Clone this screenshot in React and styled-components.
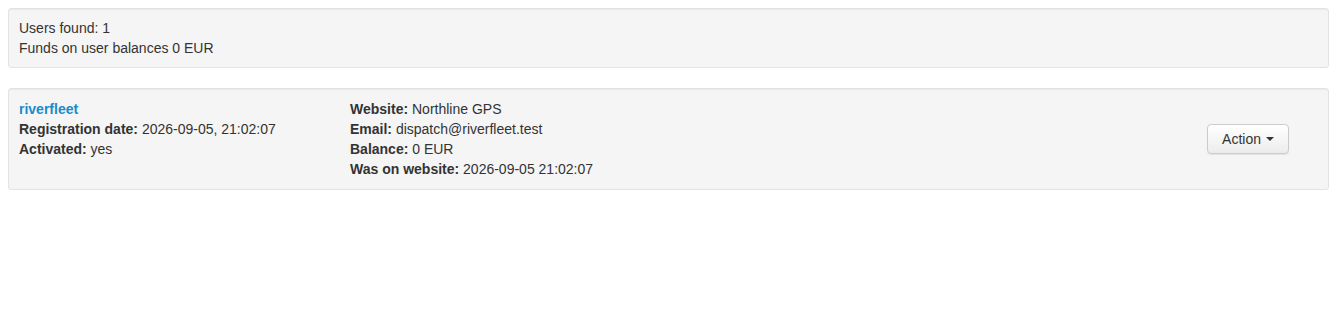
import styled, { createGlobalStyle } from "styled-components";

const GlobalStyle = createGlobalStyle`
  body {
    margin: 8px;
    font-family: "Liberation Sans", Arial, sans-serif;
    font-size: 14px;
    line-height: 20px;
    color: #333;
    background: #fff;
  }
`;

const Well = styled.div`
  background-color: #f5f5f5;
  border: 1px solid #e3e3e3;
  border-radius: 3px;
  box-shadow: inset 0 1px 1px rgba(0, 0, 0, 0.05);
  padding: ${(p) => (p.roomy ? "10px" : "9px 10px")};
  margin-bottom: 20px;
`;

const UserRow = styled.div`
  display: flex;
  align-items: center;
`;

const Column = styled.div`
  width: ${(p) => p.width || "auto"};
  flex: ${(p) => (p.grow ? 1 : "none")};
`;

const Line = styled.div``;

const Label = styled.b`
  font-weight: bold;
`;

const UserLink = styled.a`
  color: #1a8bcc;
  font-weight: bold;
  text-decoration: none;
`;

const ActionButton = styled.button`
  display: inline-flex;
  align-items: center;
  gap: 5px;
  margin-right: 29px;
  height: 30px;
  padding: 0 14px;
  font-family: inherit;
  font-size: 14px;
  color: #333;
  background: linear-gradient(to bottom, #fff 0, #ececec 100%);
  border: 1px solid #ccc;
  border-radius: 4px;
  box-shadow: inset 0 1px 0 rgba(255, 255, 255, 0.15), 0 1px 1px rgba(0, 0, 0, 0.075);
  cursor: pointer;
`;

const Caret = styled.span`
  width: 0;
  height: 0;
  border-top: 4px solid #333;
  border-left: 4px solid transparent;
  border-right: 4px solid transparent;
`;

const App = () => {
  return (
    <>
      <GlobalStyle />
      <Well>
        <Line>Users found: 1</Line>
        <Line>Funds on user balances 0 EUR</Line>
      </Well>
      <Well roomy>
        <UserRow>
          <Column width="331px">
            <Line>
              <UserLink href="#">riverfleet</UserLink>
            </Line>
            <Line>
              <Label>Registration date:</Label> 2026-09-05, 21:02:07
            </Line>
            <Line>
              <Label>Activated:</Label> yes
            </Line>
            <Line>&nbsp;</Line>
          </Column>
          <Column grow>
            <Line>
              <Label>Website:</Label> Northline GPS
            </Line>
            <Line>
              <Label>Email:</Label> dispatch@riverfleet.test
            </Line>
            <Line>
              <Label>Balance:</Label> 0 EUR
            </Line>
            <Line>
              <Label>Was on website:</Label> 2026-09-05 21:02:07
            </Line>
          </Column>
          <ActionButton>
            Action
            <Caret />
          </ActionButton>
        </UserRow>
      </Well>
    </>
  );
};

export default App;
